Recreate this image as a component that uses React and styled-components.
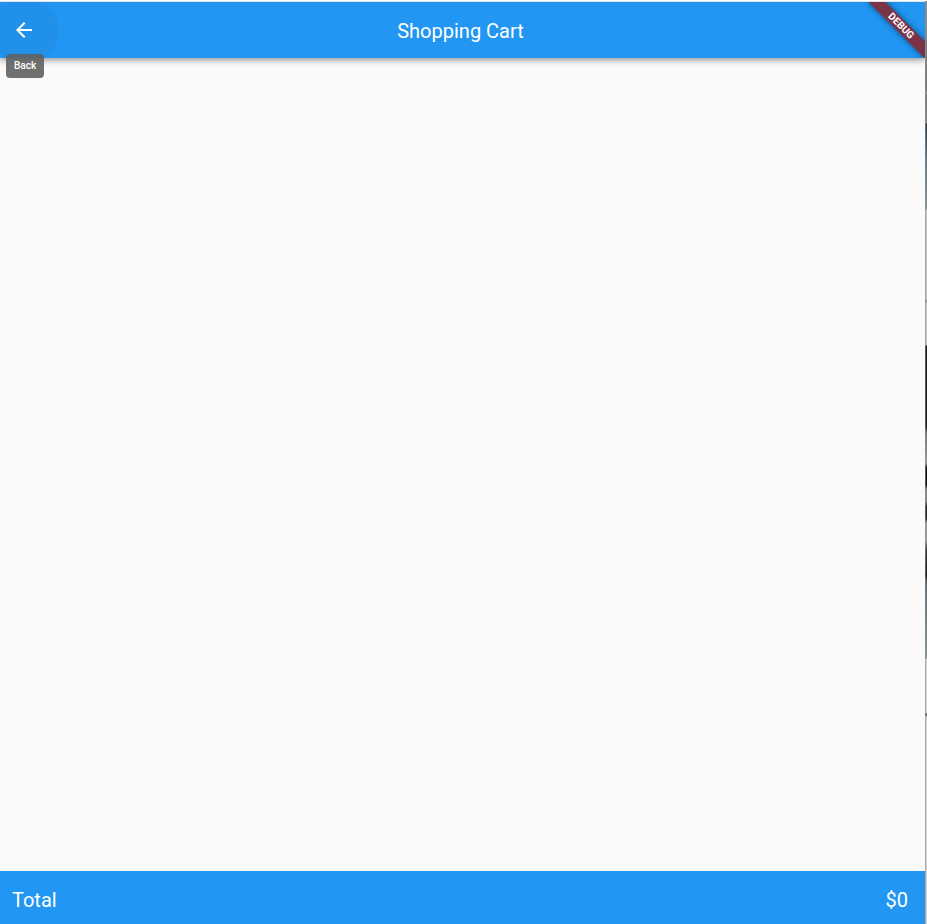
import React from "react";
import styled, { createGlobalStyle } from "styled-components";

const GlobalStyle = createGlobalStyle`
  * { box-sizing: border-box; }
  body {
    margin: 0;
    background: #fafafa;
    font-family: Roboto, "Liberation Sans", sans-serif;
  }
`;

const Window = styled.div`
  display: grid;
  grid-template-columns: 1fr 2px;
  min-height: 100vh;
  border-top: 1px solid #ffffff;
`;

const Screen = styled.div`
  position: relative;
  display: flex;
  flex-direction: column;
  min-width: 0;
  border-top: 1px solid #dfe3e6;
  overflow: hidden;
`;

const Backdrop = styled.div`
  background:
    linear-gradient(to right, rgba(140, 140, 140, 0.6) 1px, transparent 1px),
    linear-gradient(
      to bottom,
      #8d8d8f 0,
      #77777b 90px,
      #a0a0a0 92px,
      #77777b 94px,
      #85868c 122px,
      #2d3b47 123px,
      #687580 160px,
      #8a949b 208px,
      #c6c6c6 209px,
      #c6c6c6 298px,
      #8f8f8f 300px,
      #cccccc 303px,
      #cccccc 344px,
      #14191f 345px,
      #14191f 426px,
      #777777 432px,
      #999999 462px,
      #080808 467px,
      #080808 484px,
      #888888 488px,
      #888888 500px,
      #222222 506px,
      #222222 518px,
      #a0a0a0 522px,
      #999999 540px,
      #333333 550px,
      #151515 575px,
      #5d6870 581px,
      #8b959c 657px,
      #d2d2d2 658px,
      #d2d2d2 712px,
      #555555 713px,
      #555555 714px,
      #d2d2d2 716px,
      #d2d2d2 100%
    );
`;

const AppBar = styled.header`
  position: relative;
  z-index: 1;
  display: grid;
  grid-template-columns: 56px 1fr 60px;
  align-items: center;
  height: 56px;
  flex: none;
  background: #2196f3;
  color: #ffffff;
  box-shadow:
    0 2px 4px -1px rgba(0, 0, 0, 0.2),
    0 4px 5px 0 rgba(0, 0, 0, 0.14),
    0 1px 10px 0 rgba(0, 0, 0, 0.12);
`;

const BackButton = styled.button`
  display: flex;
  align-items: center;
  width: 60px;
  height: 56px;
  padding: 0 12px;
  border: 0;
  background: radial-gradient(
    circle at 24px 28px,
    rgba(0, 0, 0, 0.04) 34px,
    transparent 35px
  );
  color: inherit;
  cursor: pointer;
`;

const Title = styled.h1`
  margin: 0;
  padding-top: 2px;
  font-size: 20px;
  font-weight: 400;
  line-height: 24px;
  text-align: center;
`;

const Tooltip = styled.div`
  position: absolute;
  z-index: 2;
  top: 52px;
  left: 6px;
  height: 24px;
  padding: 0 8px;
  border-radius: 4px;
  background: rgba(97, 97, 97, 0.9);
  color: #ffffff;
  font-size: 10px;
  font-weight: 500;
  line-height: 24px;
`;

const BannerCorner = styled.div`
  position: absolute;
  z-index: 2;
  top: 0;
  right: 0;
  width: 72px;
  height: 56px;
  overflow: hidden;
  pointer-events: none;
`;

const Banner = styled.div`
  position: absolute;
  top: 18px;
  right: -16px;
  width: 80px;
  height: 12px;
  transform: rotate(45deg);
  background:
    linear-gradient(rgba(183, 28, 28, 0.63), rgba(183, 28, 28, 0.63)),
    rgba(0, 0, 0, 0.4);
  box-shadow: 0 0 6px rgba(0, 0, 0, 0.5);
  color: #ffffff;
  font-size: 10px;
  font-weight: 700;
  line-height: 12px;
  text-align: center;
`;

const CartItems = styled.main`
  flex: 1;
  background: #fafafa;
`;

const TotalBar = styled.footer`
  display: flex;
  align-items: center;
  justify-content: space-between;
  flex: none;
  padding: 17px 17px 12px 12px;
  background: #2196f3;
  color: #ffffff;
  font-size: 20px;
  line-height: 24px;
`;

function ArrowBackIcon() {
  return (
    <svg width="24" height="24" viewBox="0 0 24 24" fill="currentColor" aria-hidden="true">
      <path d="M20 11H7.83l5.59-5.59L12 4l-8 8 8 8 1.41-1.41L7.83 13H20v-2z" />
    </svg>
  );
}

export default function App() {
  return (
    <>
      <GlobalStyle />
      <Window>
        <Screen>
          <AppBar>
            <BackButton type="button" aria-label="Back" aria-describedby="back-tooltip">
              <ArrowBackIcon />
            </BackButton>
            <Title>Shopping Cart</Title>
          </AppBar>
          <Tooltip id="back-tooltip" role="tooltip">Back</Tooltip>
          <BannerCorner>
            <Banner>DEBUG</Banner>
          </BannerCorner>
          <CartItems aria-label="Cart items" />
          <TotalBar>
            <span>Total</span>
            <span>$0</span>
          </TotalBar>
        </Screen>
        <Backdrop />
      </Window>
    </>
  );
}
